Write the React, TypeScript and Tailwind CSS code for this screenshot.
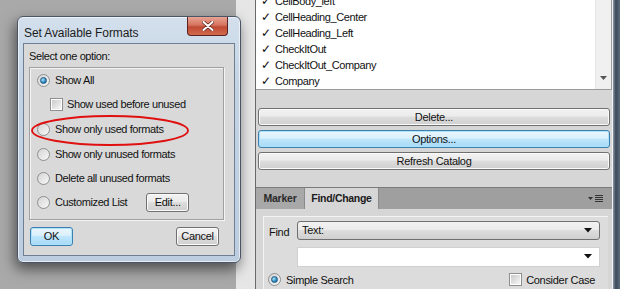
import React from "react"

const FONT = { fontFamily: '"Liberation Sans", Arial, sans-serif' }

function Radio({ checked }: { checked?: boolean }) {
  return (
    <span className="relative inline-flex h-[13px] w-[13px] shrink-0 items-center justify-center rounded-full border border-[#8e8f8f] bg-gradient-to-br from-[#d4d4d4] to-[#f8f8f8]">
      {checked && (
        <span className="h-[7px] w-[7px] rounded-full border border-[#1f5a86] bg-[radial-gradient(circle_at_35%_35%,#aee4f8,#2a86c0_60%,#145a8a)]" />
      )}
    </span>
  )
}

function Check() {
  return (
    <span className="inline-flex h-[13px] w-[13px] shrink-0 items-center justify-center border border-[#8e8f8f] bg-white">
      <span className="h-[9px] w-[9px] bg-gradient-to-br from-[#cbcbcb] to-[#f6f6f6]" />
    </span>
  )
}

function WinButton({
  children,
  focused,
  className = "",
}: {
  children: React.ReactNode
  focused?: boolean
  className?: string
}) {
  return (
    <div
      className={`flex items-center justify-center rounded-[3px] border text-[11px] tracking-[-0.3px] text-[#111] ${
        focused
          ? "border-[#3c7fb1] bg-[linear-gradient(#eaf6fd,#d9f0fc_45%,#bee6fd_50%,#a7d9f5)] shadow-[inset_0_0_0_1px_#aee2fa]"
          : "border-[#707070] bg-[linear-gradient(#f2f2f2,#ebebeb_45%,#dddddd_50%,#cfcfcf)] shadow-[inset_0_0_0_1px_#fbfbfb]"
      } ${className}`}
    >
      {children}
    </div>
  )
}

function Dialog() {
  return (
    <div className="absolute left-[17px] top-[16px] flex h-[247px] w-[224px] flex-col rounded-[6px] border border-[#4a5566] bg-[linear-gradient(#d3dfec,#c3d3e4_30%,#bccde0)] px-[5px] pb-[6px] shadow-[-2px_6px_14px_rgba(0,0,0,0.55),inset_0_0_0_1px_rgba(255,255,255,0.6)]">
      {/* title bar */}
      <div className="flex h-[26px] items-start justify-between">
        <span className="mt-[7px] pl-[1px] text-[12px] tracking-[-0.1px] text-[#1c1c1c]">Set Available Formats</span>
        <div className="mr-[7px] flex h-[19px] w-[41px] items-center justify-center rounded-b-[4px] border border-t-0 border-[#5b2424] bg-[linear-gradient(#e8a493,#d5735e_45%,#c04a33_55%,#d26a4e)]">
          <svg width="12" height="10" viewBox="0 0 12 10">
            <path d="M1.5 1 L10.5 9 M10.5 1 L1.5 9" stroke="#6b2a22" strokeWidth="3.6" strokeLinecap="round" />
            <path d="M1.5 1 L10.5 9 M10.5 1 L1.5 9" stroke="#fff" strokeWidth="2" strokeLinecap="round" />
          </svg>
        </div>
      </div>
      {/* client */}
      <div className="flex flex-1 flex-col border border-[#6f7f93] bg-[#d9d9d9] px-[5px] pt-[4px] tracking-[-0.4px]">
        <div className="text-[11px] text-[#111]">Select one option:</div>
        <div className="mt-[2px] flex h-[153px] w-[195px] flex-col border border-[#a0a0a0] pl-[7px] pt-[6px] text-[11px] text-[#111] shadow-[1px_1px_0_#f4f4f4,inset_1px_1px_0_#f4f4f4]">
          <div className="flex h-[13px] items-center gap-[5px]">
            <Radio checked />
            <span>Show All</span>
          </div>
          <div className="ml-[13px] mt-[11px] flex h-[13px] items-center gap-[4px]">
            <Check />
            <span>Show used before unused</span>
          </div>
          <div className="mt-[12px] flex h-[13px] items-center gap-[5px]">
            <Radio />
            <span>Show only used formats</span>
          </div>
          <div className="mt-[12px] flex h-[13px] items-center gap-[5px]">
            <Radio />
            <span>Show only unused formats</span>
          </div>
          <div className="mt-[11px] flex h-[13px] items-center gap-[5px]">
            <Radio />
            <span>Delete all unused formats</span>
          </div>
          <div className="mt-[11px] flex h-[13px] items-center">
            <Radio />
            <span className="ml-[5px]">Customized List</span>
            <WinButton className="ml-[19px] h-[19px] w-[43px]">Edit...</WinButton>
          </div>
        </div>
        <div className="mt-[7px] flex w-[195px] justify-between pl-[1px] pr-[5px]">
          <WinButton focused className="h-[19px] w-[43px]">
            OK
          </WinButton>
          <WinButton className="h-[19px] w-[43px]">Cancel</WinButton>
        </div>
      </div>
      {/* highlight ring */}
      <svg className="pointer-events-none absolute left-[12px] top-[97px]" width="162" height="34" viewBox="0 0 162 34">
        <ellipse cx="80" cy="16.5" rx="78" ry="14.5" fill="none" stroke="#e01010" strokeWidth="1.8" />
      </svg>
    </div>
  )
}

function CatalogList() {
  const items = [
    "CellBody_left",
    "CellHeading_Center",
    "CellHeading_Left",
    "CheckItOut",
    "CheckItOut_Company",
    "Company",
  ]
  return (
    <div className="flex h-[90px] border-b border-r border-[#9a9a9a] bg-white">
      <div className="-mt-[7px] flex flex-1 flex-col pl-[5px] text-[11px] tracking-[-0.4px] text-[#111]">
        {items.map((i) => (
          <div key={i} className="flex h-[16px] items-center">
            <span className="w-[14px] text-[12px]">✓</span>
            <span>{i}</span>
          </div>
        ))}
      </div>
      <div className="flex w-[16px] flex-col justify-end border-l border-[#e6e6e6] bg-[#f0f0f0] pb-[8px]">
        <svg width="16" height="5" viewBox="0 0 16 5">
          <path d="M4 0 H11 L7.5 4 Z" fill="#555" />
        </svg>
      </div>
    </div>
  )
}

function FindPanel() {
  return (
    <div className="flex flex-1 flex-col">
      {/* tabs */}
      <div className="flex h-[22px] items-end border-t border-[#7c7c7c] bg-[#9f9f9f]">
        <div className="flex h-[21px] w-[49px] items-center justify-center border-r border-[#8a8a8a] bg-[#a8a8a8] text-[10.5px] font-bold tracking-[-0.2px] text-[#2a2a2a]">
          Marker
        </div>
        <div className="flex h-[21px] w-[74px] items-center justify-center border-r border-[#8a8a8a] bg-[#d6d6d6] text-[10.5px] font-bold tracking-[-0.3px] text-[#1a1a1a]">
          Find/Change
        </div>
        <div className="flex flex-1 justify-end self-center pr-[8px]">
          <svg width="16" height="8" viewBox="0 0 16 8">
            <path d="M0 2 H5 L2.5 5 Z" fill="#333" />
            <path d="M7 0.5 H15 M7 2.5 H15 M7 4.5 H15 M7 6.5 H15" stroke="#333" strokeWidth="1" />
          </svg>
        </div>
      </div>
      <div className="flex-1 bg-[#d6d6d6] pl-[7px] pr-[4px] pt-[7px]">
        <div className="h-full border border-b-0 border-r-0 border-[#f3f3f3] bg-[#dcdcdc] pl-[5px] pr-[8px] pt-[4px] text-[11px] tracking-[-0.3px] text-[#111]">
          <div className="flex">
            <span className="mt-[3px] w-[28px] shrink-0">Find</span>
            <div className="flex h-[19px] flex-1 items-center justify-between rounded-[3px] border border-[#707070] bg-[linear-gradient(#f2f2f2,#ebebeb_45%,#dddddd_50%,#cfcfcf)] pl-[4px] pr-[7px]">
              <span>Text:</span>
              <svg width="8" height="5" viewBox="0 0 8 5">
                <path d="M0 0 H8 L4 4.5 Z" fill="#111" />
              </svg>
            </div>
          </div>
          <div className="ml-[28px] mt-[6px] flex h-[20px] items-center justify-end border border-[#d0d0d0] bg-white pr-[7px]">
            <svg width="8" height="5" viewBox="0 0 8 5">
              <path d="M0 0 H8 L4 4.5 Z" fill="#111" />
            </svg>
          </div>
          <div className="mt-[5px] flex items-center justify-between">
            <div className="ml-[-1px] flex items-center gap-[5px]">
              <Radio checked />
              <span>Simple Search</span>
            </div>
            <div className="flex items-center gap-[4px] pr-[5px]">
              <Check />
              <span>Consider Case</span>
            </div>
          </div>
        </div>
      </div>
    </div>
  )
}

export default function App() {
  return (
    <div className="relative flex h-[289px] w-[620px] overflow-hidden bg-[#a8a8a8]" style={FONT}>
      {/* desktop behind the dialog */}
      <div className="flex w-[255px] shrink-0">
        <div className="flex-1 bg-[#a9a9a9]" />
        <div className="w-[19px] bg-[#e6e6e6]" />
      </div>

      {/* catalog panel */}
      <div className="flex w-[357px] flex-col border-l border-[#6a6a6a] bg-[#d6d6d6]">
        <CatalogList />
        <div className="flex flex-col gap-[4px] px-[2px] pt-[18px]">
          <WinButton className="h-[18px]">Delete...</WinButton>
          <WinButton focused className="h-[18px]">
            Options...
          </WinButton>
          <WinButton className="h-[18px]">Refresh Catalog</WinButton>
        </div>
        <div className="h-[17px] shrink-0" />
        <FindPanel />
      </div>

      {/* window frame */}
      <div className="w-[8px] border-l border-[#f2f2f2] bg-[linear-gradient(90deg,#8c99a8,#3c4858_40%,#5a6a7c)]" />

      <Dialog />
    </div>
  )
}
